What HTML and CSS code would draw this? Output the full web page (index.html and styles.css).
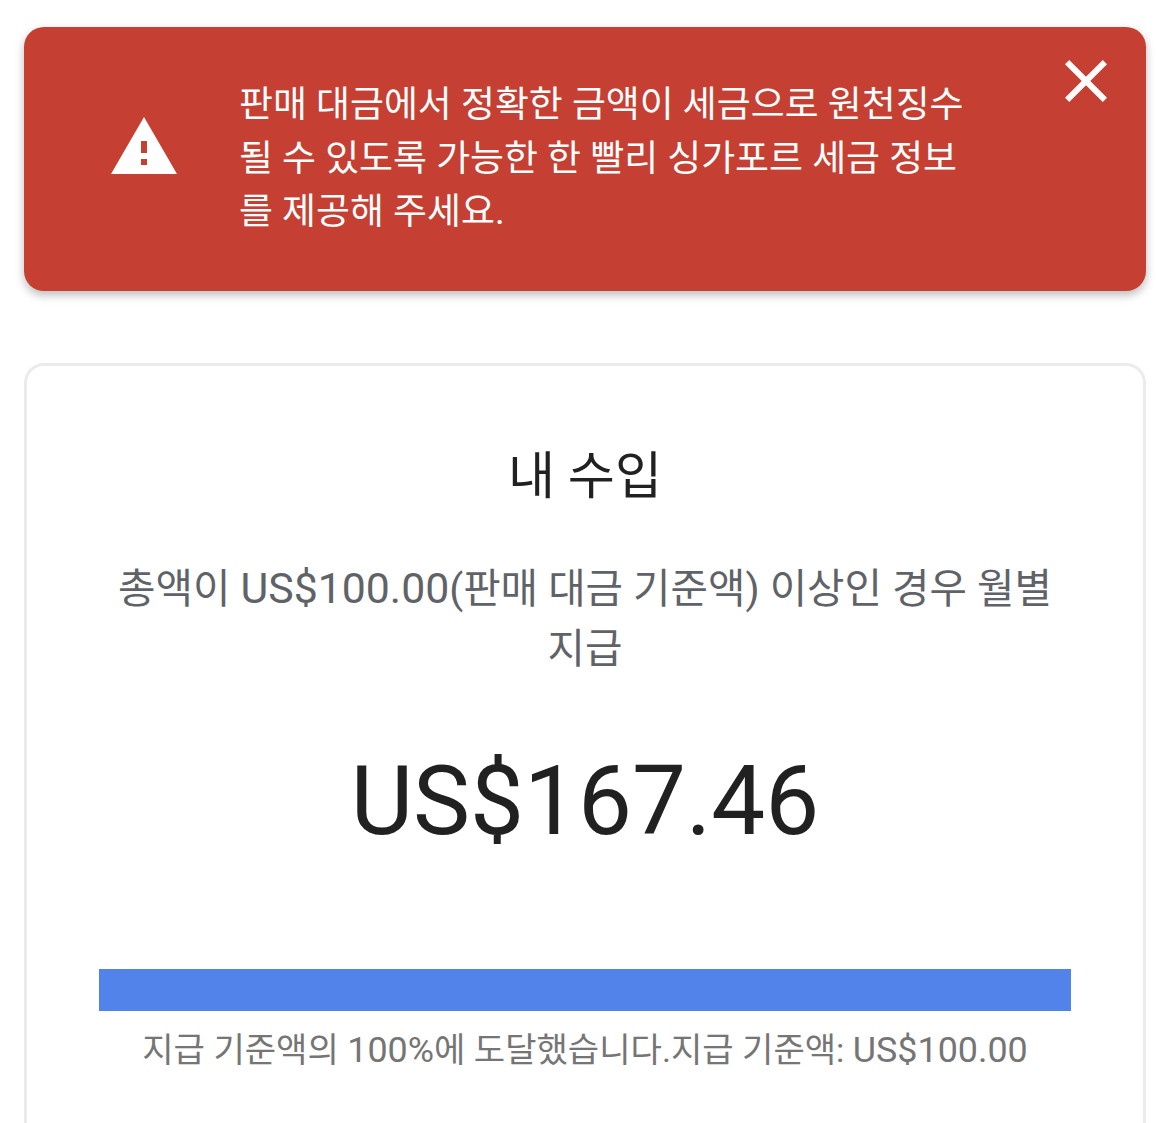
FILE: index.html
```html
<!DOCTYPE html>
<html lang="ko">
<head>
<meta charset="utf-8">
<title>내 수입</title>
<link rel="stylesheet" href="styles.css">
</head>
<body>
<div class="alert">
  <svg class="warn" viewBox="0 0 24 24" width="72" height="72"><path fill="#fff" d="M1 21h22L12 2 1 21zm12-3h-2v-2h2v2zm0-4h-2v-4h2v4z"/></svg>
  <p class="alert-text">판매 대금에서 정확한 금액이 세금으로 원천징수<br>될 수 있도록 가능한 한 빨리 싱가포르 세금 정보<br>를 제공해 주세요.</p>
  <svg class="close" viewBox="0 0 24 24" width="72" height="72"><path fill="#fff" d="M19 6.41 17.59 5 12 10.59 6.41 5 5 6.41 10.59 12 5 17.59 6.41 19 12 13.41 17.59 19 19 17.59 13.41 12z"/></svg>
</div>
<section class="card">
  <h1 class="title">내 수입</h1>
  <p class="desc">총액이 <span class="num">US$100.00</span>(판매 대금 기준액) 이상인 경우 월별 지급</p>
  <div class="amount">US$167.46</div>
  <div class="bar"></div>
  <p class="note">지급 기준액의 <span class="num">100%</span>에 도달했습니다.지급 기준액: <span class="num">US$100.00</span></p>
</section>
</body>
</html>
```
FILE: styles.css
```css
html, body { margin: 0; padding: 0; background: #fff; }
body {
  height: 1123px; overflow: hidden; box-sizing: border-box;
  padding: 27px 24px 0;
  font-family: Roboto, "Noto Sans CJK KR", sans-serif;
}
.alert {
  height: 264px; box-sizing: border-box;
  background: #c54032; border-radius: 20px;
  box-shadow: 0 4px 10px rgba(0,0,0,.27);
  display: flex; align-items: flex-start;
  padding: 51px 0 0 84px;
  position: relative;
}
.warn { margin-top: 33px; flex: none; }
.alert-text {
  margin: 0 0 0 59px; color: #fff;
  font-size: 36.9px; line-height: 53.5px; white-space: nowrap;
}
.close { position: absolute; top: 18px; right: 24px; }
.card {
  margin-top: 72px; height: 800px; box-sizing: border-box;
  border: 3px solid #ebebeb; border-radius: 20px;
  padding: 77px 72px 0; text-align: center;
}
.title { margin: 0; font-weight: 400; font-size: 51.2px; line-height: 68px; color: #212121; }
.desc { margin: 48px 0 0; font-size: 40.7px; line-height: 60px; color: #5f6368; }
.num { font-size: 1.052em; line-height: 1; }
.amount { margin-top: 60px; font-size: 96px; line-height: 124px; color: #212121; }
.bar { margin-top: 106px; height: 42px; background: #5283ea; }
.note { margin: 16px 0 0; font-size: 34.1px; line-height: 46px; color: #757575; white-space: nowrap; }
```
